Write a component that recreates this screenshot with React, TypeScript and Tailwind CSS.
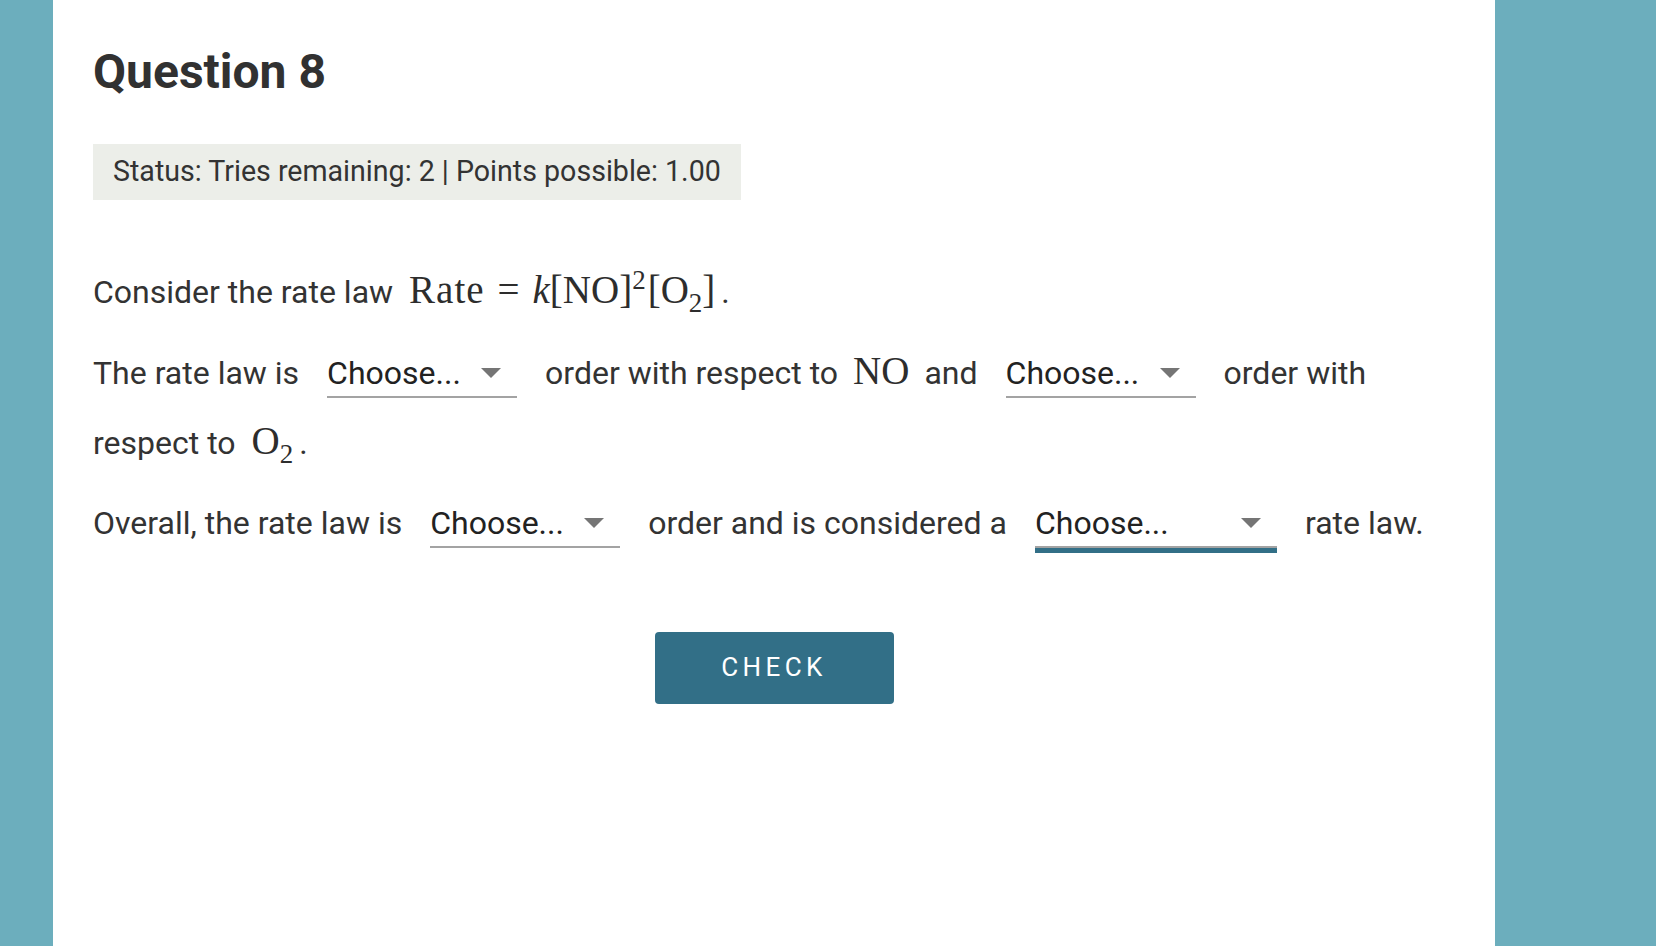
import React from 'react'

const serif = "font-['Liberation_Serif',serif]"

function Arrow() {
  return (
    <svg width="20" height="10" viewBox="0 0 20 10" className="absolute right-[16px] top-[10px]">
      <polygon points="0,0 20,0 10,10" fill="#757575" />
    </svg>
  )
}

function Choose({ wide, focused }: { wide?: boolean; focused?: boolean }) {
  return (
    <span
      className={
        'relative inline-block mx-[28px] align-baseline text-[32px] leading-[30px] pb-[8px] border-b-2 border-[#a3a3a3] text-[#222] ' +
        (wide ? 'w-[242px] ' : 'w-[190px] ') +
        (focused ? 'shadow-[0_5px_0_#326f87]' : '')
      }
    >
      Choose...
      <Arrow />
    </span>
  )
}

export default function App() {
  return (
    <div className="flex min-h-screen bg-[#6caebd] font-['Roboto',sans-serif] text-[#333]">
      <div className="ml-[53px] w-[1442px] min-h-[946px] bg-white px-10 pt-[43px]">
        <h1 className="text-[48px] leading-[1.2] font-bold text-[#313131]">Question 8</h1>

        <div className="mt-[43px] inline-flex h-[56px] items-center bg-[#eceee9] px-5 text-[28.6px] text-[#333]">
          Status: Tries remaining: 2 | Points possible: 1.00
        </div>

        <p className="mt-[57px] text-[32px] leading-[70px]">
          Consider the rate law
          <span className={serif + ' ml-[16px] inline-block text-[39px] leading-none text-[#2d2d2d]'}>
            <span className="tracking-[1px]">Rate</span>
            <span className="mx-[13px]">=</span>
            <span className="italic">k</span>
            <span>[NO]</span>
            <span className="align-super text-[27px]">2</span>
            <span className="ml-[2px]">[O</span>
            <span className="align-sub text-[27px]">2</span>
            <span>]</span>
          </span>
          <span className="ml-[6px]">.</span>
        </p>

        <p className="mt-[11px] text-[32px] leading-[70px]">
          The rate law is
          <Choose />
          order with respect to
          <span className={serif + ' mx-[15px] inline-block text-[39px] leading-none text-[#2d2d2d]'}>NO</span>
          and
          <Choose />
          order with respect to
          <span className={serif + ' ml-[16px] inline-block text-[39px] leading-none text-[#2d2d2d]'}>
            O<span className="align-sub text-[27px]">2</span>
          </span>
          <span className="ml-[6px]">.</span>
        </p>

        <p className="mt-[10px] text-[32px] leading-[70px]">
          Overall, the rate law is
          <Choose />
          order and is considered a
          <Choose wide focused />
          rate law.
        </p>

        <div className="mt-[74px] flex justify-center">
          <button className="h-[72px] w-[239px] rounded bg-[#326f87] text-[26px] font-normal tracking-[0.17em] text-white">
            CHECK
          </button>
        </div>
      </div>
      <div className="flex-1" />
    </div>
  )
}
